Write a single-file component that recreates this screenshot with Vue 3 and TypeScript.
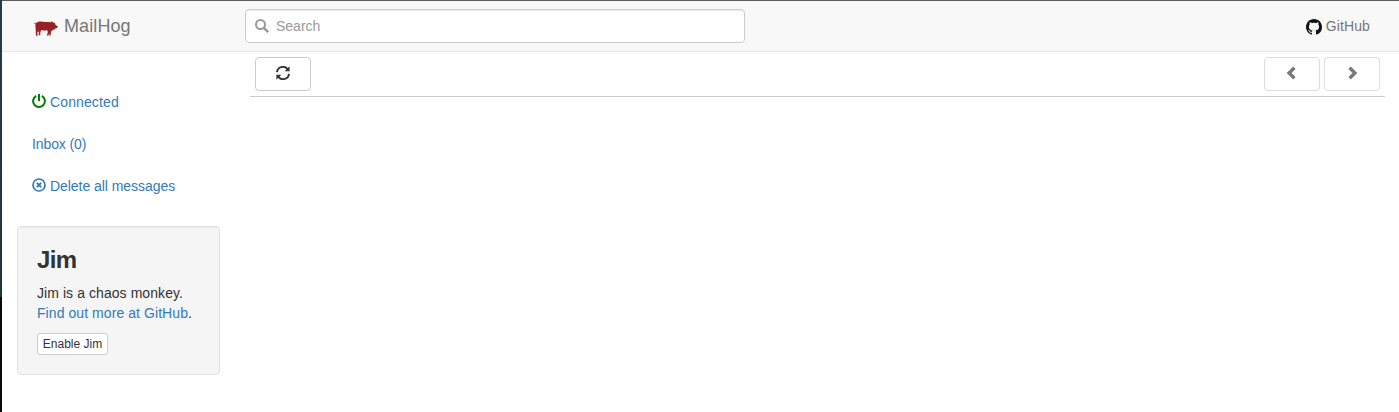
<script setup lang="ts">
import { ref } from 'vue'

const search = ref('')
const inboxCount = ref(0)
</script>

<template>
  <div class="window">
    <div class="page">
      <header class="navbar">
        <a class="brand">
          <svg class="pig" viewBox="0 0 24 15" width="24" height="15">
            <path
              fill="#972126"
              d="M.4 1.5L0 2.5L1.6 3.1C1.2 4.3 1.5 5.5 1.6 7C1.6 8.6 1.9 9.4 1.8 10.8L2 14.8H3.6L3.4 11.5L4.4 10.2L4.9 11L4.6 14.2H6.2L6.4 11.2L7.2 8.9C9.2 9.5 11.2 9.6 13.3 9.2L13.8 11.2L13.3 13.3L12.5 14.5H14.5L15.1 12L15.3 14.5H16.6L17.1 11L17.6 9.7C18.4 9.5 18.9 8.8 19.7 8.5L20.7 8.7L20.8 7.7C21.6 7.2 22.6 7.4 23.3 6.7L23.8 5.2C22.9 5 22 4.2 21.2 3.3L20.9 1.6L19.7 1.9L18.3 .6L17.3 .4L16.9 1.2C13.5 .8 11.5 1.3 9 .7C6.5 .2 3.9 .5 2.5 1.7L1.6 2.4L.7 2.1Z"
            />
          </svg>
          <span>MailHog</span>
        </a>
        <label class="search">
          <svg viewBox="0 0 14 14" width="14" height="14" fill="none" stroke="#999">
            <circle cx="5.5" cy="5.5" r="4.5" stroke-width="2" />
            <path d="M8.9 8.9L13.2 13.2" stroke-width="2.4" />
          </svg>
          <input v-model="search" type="text" placeholder="Search" />
        </label>
        <a class="github">
          <svg viewBox="0 0 16 16" width="16" height="16">
            <path
              fill="#111"
              d="M8 0C3.58 0 0 3.58 0 8c0 3.54 2.29 6.53 5.47 7.59.4.07.55-.17.55-.38 0-.19-.01-.82-.01-1.49-2.01.37-2.53-.49-2.69-.94-.09-.23-.48-.94-.82-1.13-.28-.15-.68-.52-.01-.53.63-.01 1.08.58 1.23.82.72 1.21 1.87.87 2.33.66.07-.52.28-.87.51-1.07-1.78-.2-3.64-.89-3.64-3.95 0-.87.31-1.59.82-2.15-.08-.2-.36-1.02.08-2.12 0 0 .67-.21 2.2.82.64-.18 1.32-.27 2-.27s1.36.09 2 .27c1.53-1.04 2.2-.82 2.2-.82.44 1.1.16 1.92.08 2.12.51.56.82 1.27.82 2.15 0 3.07-1.87 3.75-3.65 3.95.29.25.54.73.54 1.48 0 1.07-.01 1.93-.01 2.2 0 .21.15.46.55.38A8.01 8.01 0 0 0 16 8c0-4.42-3.58-8-8-8z"
            />
          </svg>
          <span>GitHub</span>
        </a>
      </header>

      <div class="body">
        <aside class="sidebar">
          <ul class="nav">
            <li>
              <svg viewBox="0 0 14 14" width="14" height="14" fill="none" stroke="#008000" stroke-width="2">
                <path d="M4.2 1.9A5.9 5.9 0 1 0 9.8 1.9" />
                <path d="M7 0V7" />
              </svg>
              <a class="connected">Connected</a>
            </li>
            <li><a class="inbox">Inbox ({{ inboxCount }})</a></li>
            <li>
              <svg viewBox="0 0 14 14" width="14" height="14" fill="none" stroke="#337ab7">
                <circle cx="7" cy="7" r="6" stroke-width="1.7" />
                <path d="M4.8 4.8L9.2 9.2M9.2 4.8L4.8 9.2" stroke-width="1.9" />
              </svg>
              <a class="delete">Delete all messages</a>
            </li>
          </ul>
          <section class="well">
            <h3>Jim</h3>
            <p>
              <span class="monkey">Jim is a chaos monkey.</span><br />
              <span class="more"><a>Find out more at GitHub</a>.</span>
            </p>
            <button class="small">Enable Jim</button>
          </section>
        </aside>

        <main class="content">
          <div class="toolbar">
            <button class="btn" aria-label="Refresh">
              <svg viewBox="0 0 14 14" width="14" height="14">
                <g fill="none" stroke="#333" stroke-width="1.9">
                  <path d="M1 6.2A5.9 5.9 0 0 1 11.5 3.1" />
                  <path d="M13 7.8A5.9 5.9 0 0 1 2.5 10.9" />
                </g>
                <path fill="#333" d="M13.6.3V5.2H8.7ZM.4 13.7V8.8H5.3Z" />
              </svg>
            </button>
            <div class="pager">
              <button class="btn disabled" aria-label="Previous">
                <svg viewBox="0 0 14 14" width="14" height="14" fill="none" stroke="#333" stroke-width="3.4">
                  <path d="M9.4 1.8L4.1 7L9.4 12.2" />
                </svg>
              </button>
              <button class="btn disabled" aria-label="Next">
                <svg viewBox="0 0 14 14" width="14" height="14" fill="none" stroke="#333" stroke-width="3.4">
                  <path d="M4.6 1.8L9.9 7L4.6 12.2" />
                </svg>
              </button>
            </div>
          </div>
        </main>
      </div>
    </div>
  </div>
</template>

<style>
body {
  margin: 0;
  background: #fff;
}
</style>

<style scoped>
* {
  box-sizing: border-box;
}
.window {
  display: flex;
  height: 412px;
  padding-left: 2px;
  background: linear-gradient(#263b42 0, #20343a 297px, #08090b 297px, #08090b 100%);
  font: 14px/20px "Liberation Sans", Arial, sans-serif;
  color: #333;
}
.page {
  flex: 1;
  background: #fff;
  border-top: 1px solid #5d5b60;
}
svg {
  display: block;
  flex: none;
}
a {
  color: #337ab7;
}
.navbar {
  display: flex;
  align-items: flex-start;
  height: 51px;
  background: #f8f8f8;
  border-bottom: 1px solid #e7e7e7;
}
.brand {
  display: flex;
  width: 243px;
  padding: 15px 0 0 32px;
  font-size: 18px;
  letter-spacing: 0.1px;
  color: #777;
}
.pig {
  margin: 5px 6px 0 0;
}
.search {
  display: flex;
  align-items: center;
  width: 500px;
  height: 34px;
  margin-top: 8px;
  padding: 0 9px;
  gap: 7px;
  background: #fff;
  border: 1px solid #ccc;
  border-radius: 4px;
  box-shadow: inset 0 1px 1px rgba(0, 0, 0, 0.075);
}
.search input {
  flex: 1;
  padding: 0;
  border: 0;
  outline: 0;
  background: transparent;
  font: inherit;
}
.search input::placeholder {
  color: #999;
}
.github {
  display: flex;
  margin-left: auto;
  padding: 15px 29px 0 0;
  gap: 4px;
  letter-spacing: 0.12px;
  color: #777;
}
.github svg {
  margin-top: 3px;
}
.body {
  display: flex;
}
.sidebar {
  width: 248px;
  padding: 30px 30px 0 15px;
}
.nav {
  margin: 0;
  padding: 0;
  list-style: none;
}
.nav li {
  display: flex;
  height: 40px;
  margin-bottom: 2px;
  padding: 10px 15px;
  gap: 4px;
}
.nav svg {
  margin-top: 2px;
}
.connected {
  letter-spacing: 0.12px;
}
.inbox {
  letter-spacing: -0.1px;
}
.delete {
  letter-spacing: -0.05px;
}
.well {
  width: 203px;
  height: 149px;
  margin-top: 20px;
  padding: 20px 19px 19px;
  background: #f5f5f5;
  border: 1px solid #e3e3e3;
  border-radius: 4px;
  box-shadow: inset 0 1px 1px rgba(0, 0, 0, 0.05);
}
h3 {
  margin: 0 0 10px;
  font-size: 24px;
  line-height: 26px;
  letter-spacing: -0.6px;
}
.well p {
  margin: 0 0 10px;
  white-space: nowrap;
}
.monkey,
.more {
  letter-spacing: 0.07px;
}
.small {
  display: block;
  width: 71px;
  height: 22px;
  padding: 0;
  background: #fff;
  border: 1px solid #ccc;
  border-radius: 3px;
  font: 12px/18px "Liberation Sans", Arial, sans-serif;
  color: #333;
}
.content {
  width: 1135px;
}
.toolbar {
  display: flex;
  justify-content: space-between;
  height: 45px;
  padding: 5px;
  border-bottom: 1px solid #ccc;
}
.pager {
  display: flex;
  gap: 4px;
}
.btn {
  display: flex;
  align-items: center;
  justify-content: center;
  width: 56px;
  height: 34px;
  padding: 0 0 2px;
  background: #fff;
  border: 1px solid #ccc;
  border-radius: 4px;
}
.disabled {
  opacity: 0.65;
}
</style>
